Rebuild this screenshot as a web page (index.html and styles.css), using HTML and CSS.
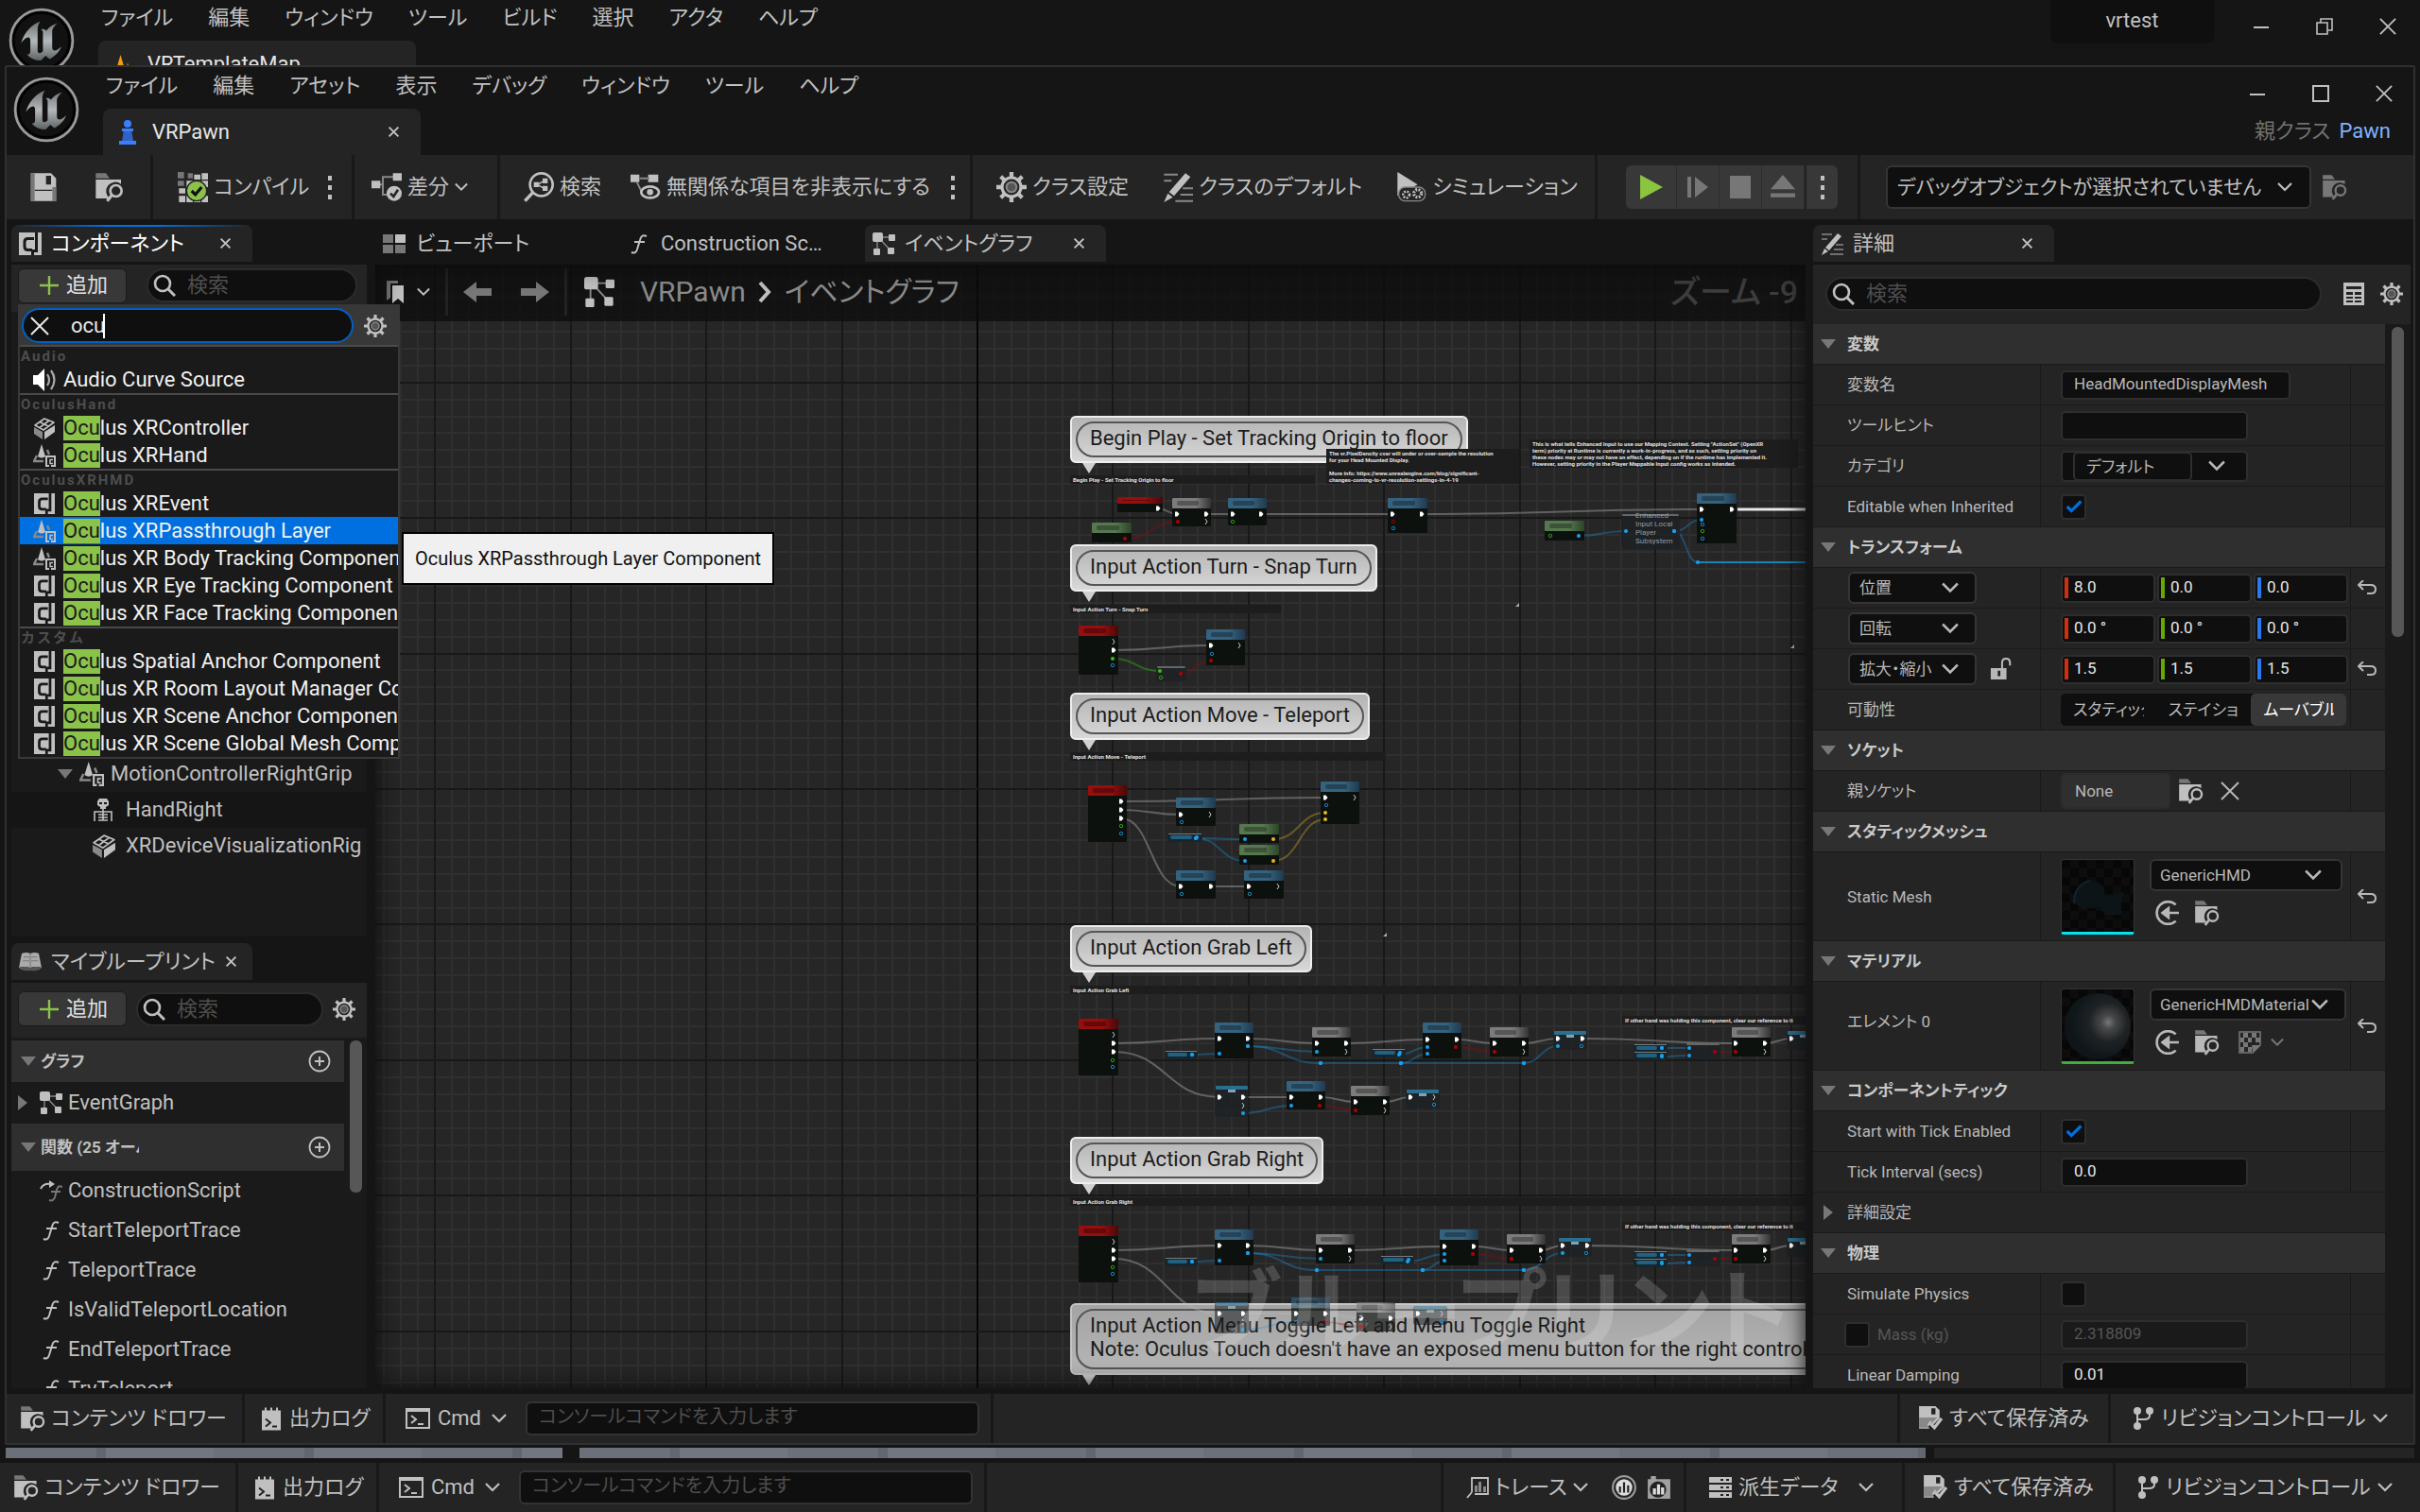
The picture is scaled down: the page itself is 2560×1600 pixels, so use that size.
FILE: index.html
```html
<!DOCTYPE html>
<html lang="ja">
<head>
<meta charset="utf-8">
<title>VRPawn</title>
<link rel="stylesheet" href="styles.css">
</head>
<body>
<svg class="defs" aria-hidden="true">
  <defs>
    <linearGradient id="steel" x1="0" y1="0" x2="0" y2="1"><stop offset="0" stop-color="#6d7274"/><stop offset=".5" stop-color="#b4b8ba"/><stop offset="1" stop-color="#5d6264"/></linearGradient>
  </defs>
  <symbol id="logo" viewBox="0 0 100 100"><circle cx="50" cy="50" r="47" fill="#111" stroke="#9b9b9b" stroke-width="4"/><circle cx="50" cy="50" r="42" fill="none" stroke="#000" stroke-width="3"/><path fill="url(#steel)" d="M48 21C36 25 24 36 19 54c3-5 8-9 11-9 2 0 3 2 3 5v16c0 4-2 5-5 5 5 6 12 9 21 9l7-7 6 5c8-4 15-11 18-19-4 4-8 6-10 6-3 0-4-2-4-5V36c0-4 3-8 8-12-8 2-13 6-17 11-2-2-5-3-8-2 2 1 3 3 3 5v28c-2 2-4 3-5 3-2 0-3-2-3-4V34c0-5 1-9 4-13z"/></symbol>
  <symbol id="save" viewBox="0 0 24 24"><path fill="currentColor" fill-rule="evenodd" d="M2 1h16l4 4v18H2zM5 14v7h14v-7zM14 3v7h4V3z"/><path fill="#777" d="M2 1h3v22H2zM19 12h3v11h-3z"/><path fill="currentColor" d="M5 15h14v6H5z"/></symbol>
  <symbol id="folder" viewBox="0 0 24 24"><path fill="#777" d="M1 1h8l3 4H1z"/><path fill="currentColor" d="M1 6h20v3.500a7 7 0 0 0-9 11.500H1z"/><circle cx="17" cy="15" r="4.500" fill="none" stroke="currentColor" stroke-width="2"/><path stroke="currentColor" stroke-width="2.400" d="M14 18l-4 5"/></symbol>
  <symbol id="compile" viewBox="0 0 24 24"><path fill="#777" d="M0 0h5v5H0zM8 1h4v4H8zM0 7h5v4H0z"/><path fill="currentColor" d="M13 2h5v4h-5zM19 1h5v5h-5zM19 7h5v5h-5zM13 7h5v4h-5zM1 13h5v4H1zM1 19h5v5H1zM7 19h5v5H7zM13 19h5v5h-5zM19 19h5v5h-5zM7 7h5v5H7z"/><circle cx="15" cy="15" r="8" fill="#8bc24a" stroke="#242424"/><path fill="none" stroke="#111" stroke-width="2.400" d="M11 15l3 3 5-6"/></symbol>
  <symbol id="dots" viewBox="0 0 8 32"><path fill="currentColor" d="M2 4h4v5H2zM2 14h4v5H2zM2 24h4v5H2z"/></symbol>
  <symbol id="diff" viewBox="0 0 24 24"><path fill="none" stroke="#888" stroke-width="1.500" d="M5 10h4V4h9M9 10v8h4"/><path fill="currentColor" d="M0 7h7v6H0zM17 1h7v6h-7z"/><circle cx="18" cy="17" r="6" fill="currentColor"/><path fill="none" stroke="#242424" stroke-width="2" d="M15 17l2.500 2.500L21 14"/></symbol>
  <symbol id="find" viewBox="0 0 24 24"><circle cx="14" cy="10" r="9" fill="none" stroke="currentColor" stroke-width="2"/><path stroke="currentColor" stroke-width="2.600" d="M7.500 16L1 23"/><path fill="currentColor" d="M8 8h4v4H8zM15 5h4v4h-4zM15 11h4v4h-4z"/><path stroke="currentColor" d="M11 10l5-3M11 10l5 3"/></symbol>
  <symbol id="hide" viewBox="0 0 24 24"><path fill="currentColor" d="M0 2h7v6H0zM14 2h8v6h-8z"/><path fill="none" stroke="#888" stroke-width="1.500" d="M7 5h8M5 8l4 8"/><ellipse cx="15.500" cy="16" rx="7" ry="4.500" fill="#242424" stroke="currentColor" stroke-width="2"/><circle cx="15.500" cy="16" r="2.500" fill="currentColor"/></symbol>
  <symbol id="gear" viewBox="0 0 24 24"><path stroke="currentColor" stroke-width="3.200" d="M12 0v24M0 12h24M3.500 3.500l17 17M20.500 3.500l-17 17"/><circle cx="12" cy="12" r="7.500" fill="#242424" stroke="currentColor" stroke-width="2.400"/><circle cx="12" cy="12" r="4" fill="#555" stroke="#888" stroke-width="1.500"/></symbol>
  <symbol id="pencil" viewBox="0 0 24 24"><path stroke="#888" stroke-width="1.500" d="M1 2h11M1 7h6M16 13h8M14 18h10M10 23h14"/><path fill="currentColor" d="M18 1l4 3L9 19l-4-3zM4 17l4 3-7 4z"/></symbol>
  <symbol id="simulate" viewBox="0 0 24 24"><path fill="currentColor" d="M1 0l16 10L1 19z"/><rect x="2" y="12" width="21" height="11" rx="5" fill="#242424" stroke="#888"/><g fill="none" stroke="currentColor" stroke-dasharray="1.400 1"><circle cx="8" cy="18" r="2.500" stroke-width="2"/><circle cx="17" cy="17" r="3" stroke-width="2.400"/></g></symbol>
  <symbol id="play" viewBox="0 0 24 24"><path fill="#8bc53f" d="M1 0l22 12L1 24z"/></symbol>
  <symbol id="step" viewBox="0 0 24 24"><path fill="currentColor" d="M1 1h4v22H1zM9 1l14 11L9 23z"/></symbol>
  <symbol id="stop" viewBox="0 0 24 24"><path fill="currentColor" d="M1 0h22v24H1z"/></symbol>
  <symbol id="eject" viewBox="0 0 24 24"><path fill="currentColor" d="M12 0l12 14H0zM0 18h24v4H0z"/></symbol>
  <symbol id="chev" viewBox="0 0 16 16"><path fill="none" stroke="currentColor" stroke-width="2.200" d="M1 4l7 7 7-7"/></symbol>
  <symbol id="comp" viewBox="0 0 24 24" preserveAspectRatio="none"><path fill="currentColor" d="M0 0h24v24H0z"/><path fill="#1a1a1a" d="M17 0h3v21h-4v3h-3v-6h4z"/><path fill="none" stroke="#1a1a1a" stroke-width="3" d="M16 6.500H9.500Q6 6.500 6 10v5q0 3.500 3.500 3.500H14"/></symbol>
  <symbol id="x" viewBox="0 0 16 16"><path stroke="currentColor" stroke-width="2.400" d="M2 2l12 12M14 2L2 14"/></symbol>
  <symbol id="xbig" viewBox="0 0 20 20"><path stroke="currentColor" stroke-width="2" d="M1 1l18 18M19 1L1 19"/></symbol>
  <symbol id="plus" viewBox="0 0 20 20"><path stroke="#8bc24a" stroke-width="2.400" d="M10 0v20M0 10h20"/></symbol>
  <symbol id="search" viewBox="0 0 24 24"><circle cx="10" cy="10" r="8" fill="none" stroke="currentColor" stroke-width="2.600"/><path stroke="currentColor" stroke-width="3" d="M16 16l7 7"/></symbol>
  <symbol id="bookmark" viewBox="0 0 18 24"><path fill="#777" d="M0 0h12v3H4v15l-4 3z"/><path fill="currentColor" d="M6 5h12v19l-6-5-6 5z"/></symbol>
  <symbol id="left" viewBox="0 0 30 24"><path fill="currentColor" d="M0 12L14 1v7h16v8H14v7z"/></symbol>
  <symbol id="right" viewBox="0 0 30 24"><path fill="currentColor" d="M30 12L16 1v7H0v8h16v7z"/></symbol>
  <symbol id="nodes" viewBox="0 0 24 24"><path fill="none" stroke="#888" stroke-width="1.400" d="M5 5v15M6 5h15M7 6l12 13"/><g fill="currentColor"><rect width="11" height="10" rx="2"/><rect x="17" y="2" width="7" height="7" rx="1"/><rect x="1" y="17" width="7" height="7" rx="1"/><rect x="16" y="16" width="7" height="7" rx="1"/></g></symbol>
  <symbol id="viewport" viewBox="0 0 24 24"><path fill="#777" d="M0 2h11v9H0zM0 13h11v9H0zM13 13h11v9H13z"/><path fill="currentColor" d="M13 2h11v9H13z"/></symbol>
  <symbol id="func" viewBox="0 0 24 24"><path fill="none" stroke="currentColor" stroke-width="2" d="M20 4c-4-2-6 0-7 4l-3 10c-1 3-3 4.500-6 3M7 10h11"/></symbol>
  <symbol id="funcover" viewBox="0 0 24 24"><path fill="none" stroke="#777" stroke-width="2" d="M24 8c-4-2-5 0-6 3l-2 8c-1 3-3 4-6 3M12 13h10"/><path fill="none" stroke="currentColor" stroke-width="2" d="M1 10q3-6 10-5"/><path fill="currentColor" d="M10 1l6 4-6 4z"/></symbol>
  <symbol id="skel" viewBox="0 0 24 24"><path fill="currentColor" fill-rule="evenodd" d="M8 0h8l2 3v4l-3 2v2H9V9L6 7V3zM8 4v2h3V4zM13 4v2h3V4z"/><path fill="none" stroke="currentColor" stroke-width="1.600" d="M12 11v12M3 24V14h18v10M7 17h10M7 20h10M7 23h10"/></symbol>
  <symbol id="mesh" viewBox="0 0 24 24"><path fill="none" stroke="currentColor" stroke-width="1.600" stroke-linejoin="round" d="M2 9l10-7 10 4-11 8zM7 5.500l9 4.500M17 4L7 11.500"/><path fill="#8a8a8a" d="M1 11l9 5v8l-9-6z"/><path fill="currentColor" d="M12 16l11-7v7l-11 8z"/></symbol>
  <symbol id="scene" viewBox="0 0 24 24"><path fill="currentColor" d="M9 0l4 13q-4 3-8 0z"/><path fill="none" stroke="#888" stroke-width="2.400" d="M4 12l-3 6h10M15 6l2 5"/><path fill="currentColor" d="M13 12h11v12h-5v-2h3v-8h-7v8h2v2h-4z"/><path fill="none" stroke="currentColor" stroke-width="1.500" d="M21 16.500h-3v4h3"/></symbol>
  <symbol id="book" viewBox="0 0 24 24"><path fill="#aaa" d="M3 3q5-2 9 0 5-2 9 0l3 15q-6-2-12 0-6-2-12 0z"/><path fill="none" stroke="#777" d="M12 3v14M5 7q3-1 6 0M4 11q3-1 7 0M13 7q3-1 6 0M13 11q4-1 7 0"/><path fill="#555" d="M0 18q6-2 12 0 6-2 12 0-3 4-11 3Q3 22 0 18z"/></symbol>
  <symbol id="pluscircle" viewBox="0 0 24 24"><circle cx="12" cy="12" r="10.500" fill="none" stroke="currentColor" stroke-width="1.800"/><path stroke="currentColor" stroke-width="2" d="M12 7v10M7 12h10"/></symbol>
  <symbol id="log" viewBox="0 0 20 24"><path fill="currentColor" d="M0 3h20v21H0z"/><path stroke="currentColor" stroke-width="2" d="M4 0v4M10 0v4M16 0v4"/><path fill="none" stroke="#222" stroke-width="2" d="M4 12l5 4-5 4M11 20h5"/></symbol>
  <symbol id="cmd" viewBox="0 0 26 22"><path fill="none" stroke="currentColor" stroke-width="2" d="M1 1h24v20H1zM6 8l5 4-5 4M13 17h6"/><path fill="currentColor" d="M1 1h24v3H1z"/></symbol>
  <symbol id="saved" viewBox="0 0 24 24"><path fill="currentColor" fill-rule="evenodd" d="M1 0h16l4 4v8l-6 6-2-2-3 4 1 2H1zM13 2v6h4V2z"/><path fill="#888" d="M1 11h18l-5 5-2-2-3 4 2 3H1z"/><path fill="none" stroke="currentColor" stroke-width="3" d="M12 17l4 4 7-9"/></symbol>
  <symbol id="branch" viewBox="0 0 24 24"><g fill="currentColor"><circle cx="6" cy="4" r="4"/><circle cx="19" cy="4" r="4"/><circle cx="6" cy="20" r="4"/></g><path fill="none" stroke="currentColor" stroke-width="2" d="M6 4v16M19 4v5q0 4-6 4H6"/></symbol>
  <symbol id="trace" viewBox="0 0 24 24"><path fill="none" stroke="currentColor" stroke-width="1.800" d="M6 17V2h17v17H9M6 17l-5 6"/><path fill="#888" d="M9 10h3v7H9zM13 6h3v11h-3zM18 11h3v6h-3z"/></symbol>
  <symbol id="insight" viewBox="0 0 24 24"><circle cx="12" cy="12" r="11" fill="none" stroke="#999" stroke-width="2"/><circle cx="12" cy="12" r="8" fill="#ddd"/><path fill="#222" d="M7 11h2v6H7zM11 7h2v10h-2zM15 10h2v7h-2z"/></symbol>
  <symbol id="cam" viewBox="0 0 24 24"><path fill="#a0a0a0" d="M1 4h3V1h5v3h14v19H1z"/><circle cx="11" cy="14" r="8" fill="#222"/><path fill="#ddd" d="M6 13h3v6H6zM10 9h3v10h-3zM14 12h3v7h-3z"/></symbol>
  <symbol id="ddc" viewBox="0 0 24 24"><path fill="currentColor" d="M0 1h24v6H0zM0 9h24v6H0zM0 17h24v6H0z"/><path fill="#222" d="M12 3h3v2h-3zM18 3h3v2h-3zM12 11h3v2h-3zM18 11h3v2h-3zM12 19h3v2h-3zM18 19h3v2h-3z"/></symbol>
  <symbol id="reset" viewBox="0 0 20 16"><path fill="none" stroke="currentColor" stroke-width="2" d="M6 0L1 5l5 5M1 5h13q5 0 5 4.500T14 14h-4"/></symbol>
  <symbol id="lock" viewBox="0 0 24 26"><path fill="currentColor" fill-rule="evenodd" d="M0 12h18v13H0zM8 15v6h3v-6z"/><path fill="none" stroke="currentColor" stroke-width="2.200" d="M13 12V6q0-5 4.500-5T22 6v3"/></symbol>
  <symbol id="use" viewBox="0 0 24 24"><path fill="none" stroke="currentColor" stroke-width="2.400" d="M20 4a11 11 0 1 0 0 16M23 12H8"/><path fill="currentColor" d="M14 5v14l-9-7z"/></symbol>
  <symbol id="checker" viewBox="0 0 24 24"><path fill="none" stroke="currentColor" stroke-width="1.500" d="M1 1h22v14l-8 8H1z"/><path fill="currentColor" d="M5 2h5v5H5zM14 2h5v5h-5zM2 7h4v5H2zM10 7h4v5h-4zM18 7h5v5h-5zM5 12h5v5H5zM14 15h9l-8 8zM10 17h4v5h-4zM2 17h4v5H2z"/></symbol>
  <symbol id="table" viewBox="0 0 24 24"><path fill="currentColor" fill-rule="evenodd" d="M1 0h22v24H1zM4 4v3h16V4zM4 10v3h7v-3zM13 10v3h7v-3zM4 15v2h7v-2zM13 15v2h7v-2zM4 19v2h7v-2zM13 19v2h7v-2z"/></symbol>
  <symbol id="audio" viewBox="0 0 24 24"><path fill="#fff" d="M0 7h5l7-7v24l-7-7H0z"/><path fill="none" stroke="#aaa" stroke-width="2.200" d="M15 6q4 6 0 12M19 2q7 10 0 20"/></symbol>
  <symbol id="pawn" viewBox="0 0 20 26"><circle cx="10" cy="4" r="4" fill="#3d7eff"/><path fill="#2f62c8" d="M6 11h8l2 11H4z"/><path fill="#3d7eff" d="M4 9h12v3H4zM1 22h18v4H1z"/></symbol>
  <symbol id="map" viewBox="0 0 24 24"><path fill="#f39c12" d="M9 0l7 24H2zM18 10l4 14h-7z"/></symbol>
</svg>

<header class="outer-head">
  <svg class="logo"><use href="#logo"/></svg>
  <div class="head-main">
    <nav class="menu"><a href="#f">ファイル</a><a href="#e">編集</a><a href="#w">ウィンドウ</a><a href="#t">ツール</a><a href="#b">ビルド</a><a href="#s">選択</a><a href="#a">アクタ</a><a href="#h">ヘルプ</a></nav>
    <div class="doc-tab"><svg class="i20"><use href="#map"/></svg><span>VRTemplateMap</span></div>
  </div>
  <div class="project">vrtest</div>
  <div class="winctl">
    <button aria-label="最小化"><svg class="i18" viewBox="0 0 18 18"><path stroke="currentColor" stroke-width="2" d="M1 10h16"/></svg></button>
    <button aria-label="元に戻す"><svg class="i18" viewBox="0 0 18 18"><path fill="none" stroke="currentColor" stroke-width="1.600" d="M1 5h11v12H1zM5 5V1h12v12h-5"/></svg></button>
    <button aria-label="閉じる"><svg class="i18"><use href="#xbig"/></svg></button>
  </div>
</header>

<main class="window">
  <header class="inner-head">
    <svg class="logo"><use href="#logo"/></svg>
    <div class="head-main">
      <nav class="menu"><a href="#f">ファイル</a><a href="#e">編集</a><a href="#as">アセット</a><a href="#v">表示</a><a href="#d">デバッグ</a><a href="#w">ウィンドウ</a><a href="#t">ツール</a><a href="#h">ヘルプ</a></nav>
      <div class="doc-tab"><svg class="pawn"><use href="#pawn"/></svg><span>VRPawn</span><button aria-label="閉じる"><svg class="i12"><use href="#x"/></svg></button></div>
    </div>
    <div class="head-right">
      <div class="winctl">
        <button aria-label="最小化"><svg class="i18" viewBox="0 0 18 18"><path stroke="currentColor" stroke-width="2" d="M1 10h16"/></svg></button>
        <button aria-label="最大化"><svg class="i18" viewBox="0 0 18 18"><path fill="none" stroke="currentColor" stroke-width="2" d="M1 1h16v16H1z"/></svg></button>
        <button aria-label="閉じる"><svg class="i18"><use href="#xbig"/></svg></button>
      </div>
      <p class="parent">親クラス <a href="#pawn-class">Pawn</a></p>
    </div>
  </header>

  <div class="toolbar">
    <div class="grp g1"><button aria-label="保存"><svg class="i32"><use href="#save"/></svg></button><button aria-label="参照"><svg class="i32"><use href="#folder"/></svg></button></div>
    <div class="grp g2"><button><svg class="i32"><use href="#compile"/></svg>コンパイル</button><button aria-label="オプション"><svg class="dots"><use href="#dots"/></svg></button></div>
    <div class="grp g3"><button><svg class="i32"><use href="#diff"/></svg>差分<svg class="i14"><use href="#chev"/></svg></button></div>
    <div class="grp g4"><button><svg class="i32"><use href="#find"/></svg>検索</button><button><svg class="i32"><use href="#hide"/></svg>無関係な項目を非表示にする</button><button aria-label="オプション"><svg class="dots"><use href="#dots"/></svg></button></div>
    <div class="grp g5"><button><svg class="i32"><use href="#gear"/></svg>クラス設定</button><button><svg class="i32"><use href="#pencil"/></svg>クラスのデフォルト</button><button><svg class="i32"><use href="#simulate"/></svg>シミュレーション</button></div>
    <div class="grp g6"><div class="playset"><button class="first" aria-label="再生"><svg class="i26"><use href="#play"/></svg></button><button aria-label="ステップ"><svg class="i24"><use href="#step"/></svg></button><button aria-label="停止"><svg class="i24"><use href="#stop"/></svg></button><button aria-label="イジェクト"><svg class="i26"><use href="#eject"/></svg></button><button class="more" aria-label="その他"><svg class="dots"><use href="#dots"/></svg></button></div></div>
    <div class="grp g7"><span class="select debug"><select aria-label="デバッグ"><option>デバッグオブジェクトが選択されていません</option></select><svg class="i16"><use href="#chev"/></svg></span><button class="dim" aria-label="参照"><svg class="i28"><use href="#folder"/></svg></button></div>
  </div>

  <div class="work">
    <aside class="left">
      <div class="tabs"><div class="tab active"><svg class="i24"><use href="#comp"/></svg><span>コンポーネント</span><button aria-label="閉じる"><svg class="i12"><use href="#x"/></svg></button></div></div>
      <section class="panel components">
        <div class="bar"><button class="add"><svg class="i20"><use href="#plus"/></svg>追加</button><label class="search"><svg class="i24"><use href="#search"/></svg><input type="search" placeholder="検索" aria-label="検索"></label></div>
        <ul class="tree">
          <li><i class="tri"></i><svg class="i26"><use href="#scene"/></svg>MotionControllerRightGrip</li>
          <li class="child alt"><svg class="i24"><use href="#skel"/></svg>HandRight</li>
          <li class="child"><svg class="i26"><use href="#mesh"/></svg>XRDeviceVisualizationRig</li>
        </ul>
        <div class="popup">
          <div class="pop-bar"><label class="pop-search"><svg class="i20"><use href="#xbig"/></svg><input type="text" value="ocu" aria-label="コンポーネントを検索"><i class="caret"></i></label><button aria-label="設定"><svg class="i24"><use href="#gear"/></svg></button></div>
          <h4>Audio</h4>
          <ul><li><svg class="i24"><use href="#audio"/></svg>Audio Curve Source</li></ul>
          <h4>OculusHand</h4>
          <ul><li><svg class="i24"><use href="#mesh"/></svg><mark>Ocu</mark>lus XRController</li><li><svg class="i24"><use href="#scene"/></svg><mark>Ocu</mark>lus XRHand</li></ul>
          <h4>OculusXRHMD</h4>
          <ul><li><svg class="i24 c"><use href="#comp"/></svg><mark>Ocu</mark>lus XREvent</li><li class="sel"><svg class="i24"><use href="#scene"/></svg><mark>Ocu</mark>lus XRPassthrough Layer</li><li><svg class="i24"><use href="#scene"/></svg><mark>Ocu</mark>lus XR Body Tracking Component</li><li><svg class="i24 c"><use href="#comp"/></svg><mark>Ocu</mark>lus XR Eye Tracking Component</li><li><svg class="i24 c"><use href="#comp"/></svg><mark>Ocu</mark>lus XR Face Tracking Component</li></ul>
          <h4>カスタム</h4>
          <ul><li><svg class="i24 c"><use href="#comp"/></svg><mark>Ocu</mark>lus Spatial Anchor Component</li><li><svg class="i24 c"><use href="#comp"/></svg><mark>Ocu</mark>lus XR Room Layout Manager Component</li><li><svg class="i24 c"><use href="#comp"/></svg><mark>Ocu</mark>lus XR Scene Anchor Component</li><li><svg class="i24 c"><use href="#comp"/></svg><mark>Ocu</mark>lus XR Scene Global Mesh Component</li></ul>
        </div>
        <div class="tooltip" role="tooltip">Oculus XRPassthrough Layer Component</div>
      </section>
      <div class="tabs second"><div class="tab"><svg class="i24"><use href="#book"/></svg><span>マイブループリント</span><button aria-label="閉じる"><svg class="i12"><use href="#x"/></svg></button></div></div>
      <section class="panel blueprint">
        <div class="bar"><button class="add"><svg class="i20"><use href="#plus"/></svg>追加</button><label class="search"><svg class="i24"><use href="#search"/></svg><input type="search" placeholder="検索" aria-label="検索"></label><button aria-label="設定"><svg class="i24"><use href="#gear"/></svg></button></div>
        <div class="scroll">
          <div class="items">
            <h3><i class="tri"></i>グラフ<button aria-label="グラフを追加"><svg class="i24"><use href="#pluscircle"/></svg></button></h3>
            <ul><li class="graph"><i class="tri side"></i><svg class="i24"><use href="#nodes"/></svg>EventGraph</li></ul>
            <h3 class="tall"><i class="tri"></i><span class="cut">関数 (25 オーバーライド可能)</span><button aria-label="関数を追加"><svg class="i24"><use href="#pluscircle"/></svg></button></h3>
            <ul class="fn"><li><svg class="i24"><use href="#funcover"/></svg>ConstructionScript</li><li><svg class="i24"><use href="#func"/></svg>StartTeleportTrace</li><li><svg class="i24"><use href="#func"/></svg>TeleportTrace</li><li><svg class="i24"><use href="#func"/></svg>IsValidTeleportLocation</li><li><svg class="i24"><use href="#func"/></svg>EndTeleportTrace</li><li><svg class="i24"><use href="#func"/></svg>TryTeleport</li></ul>
          </div>
          <div class="thumb"></div>
        </div>
      </section>
    </aside>

    <section class="center">
      <div class="tabs"><div class="tab off"><svg class="i24"><use href="#viewport"/></svg><span>ビューポート</span></div><div class="tab off"><svg class="i24"><use href="#func"/></svg><span>Construction Sc…</span></div><div class="tab"><svg class="i24"><use href="#nodes"/></svg><span>イベントグラフ</span><button aria-label="閉じる"><svg class="i12"><use href="#x"/></svg></button></div></div>
      <div class="graph-area">
        <svg class="canvas"><g id="grid"></g></svg>
        <p class="mark-text">ブループリント</p>
        <div class="bubble" style="left:735px;top:160px"><span>Begin Play - Set Tracking Origin to floor</span></div>
        <div class="bubble" style="left:735px;top:296px"><span>Input Action Turn - Snap Turn</span></div>
        <div class="bubble" style="left:735px;top:453px"><span>Input Action Move - Teleport</span></div>
        <div class="bubble" style="left:735px;top:699px"><span>Input Action Grab Left</span></div>
        <div class="bubble" style="left:735px;top:923px"><span>Input Action Grab Right</span></div>
        <div class="bubble wide" style="left:735px;top:1099px"><span>Input Action Menu Toggle Left and Menu Toggle Right<br>Note: Oculus Touch doesn't have an exposed menu button for the right controller</span></div>
        <svg class="canvas over"><g id="nodes-layer" transform="translate(-397 -280)"></g></svg>
        <p class="note" style="left:735px;top:223px;width:259px">Begin Play - Set Tracking Origin to floor</p>
        <p class="note" style="left:735px;top:360px;width:223px">Input Action Turn - Snap Turn</p>
        <p class="note" style="left:735px;top:516px;width:334px">Input Action Move - Teleport</p>
        <p class="note" style="left:735px;top:763px;width:778px">Input Action Grab Left</p>
        <p class="note" style="left:735px;top:987px;width:778px">Input Action Grab Right</p>
        <p class="note" style="left:1006px;top:195px;width:204px">The vr.PixelDensity cvar will under or over-sample the resolution<br>for your Head Mounted Display.<br><br>More info: https://www.unrealengine.com/blog/significant-<br>changes-coming-to-vr-resolution-settings-in-4-19</p>
        <p class="note" style="left:1221px;top:185px;width:284px">This is what tells Enhanced Input to use our Mapping Context. Setting "ActionSet" (OpenXR<br>term) priority at Runtime is currently a work-in-progress, and as such, setting priority on<br>these nodes may or may not have an effect, depending on if the runtime has implemented it.<br>However, setting priority in the Player Mappable Input config works as intended.</p>
        <p class="note" style="left:1319px;top:795px;width:300px">If other hand was holding this component, clear our reference to it</p>
        <p class="note" style="left:1319px;top:1013px;width:300px">If other hand was holding this component, clear our reference to it</p>
        <p class="node-name" style="left:1333px;top:261px">Enhanced<br>Input Local<br>Player<br>Subsystem</p>
        <div class="graph-bar">
          <button aria-label="ブックマーク"><svg class="bm"><use href="#bookmark"/></svg><svg class="i14"><use href="#chev"/></svg></button><i class="vr"></i>
          <button aria-label="戻る"><svg class="arrow"><use href="#left"/></svg></button><button aria-label="進む"><svg class="arrow"><use href="#right"/></svg></button><i class="vr"></i>
          <svg class="i34"><use href="#nodes"/></svg><span class="crumb">VRPawn</span><svg class="crumb-sep" viewBox="0 0 16 24"><path fill="none" stroke="currentColor" stroke-width="4" d="M3 2l9 10-9 10"/></svg><span class="crumb">イベントグラフ</span>
          <b class="zoom">ズーム -9</b>
        </div>
      </div>
    </section>

    <aside class="right">
      <div class="tabs"><div class="tab"><svg class="i24"><use href="#pencil"/></svg><span>詳細</span><button aria-label="閉じる"><svg class="i12"><use href="#x"/></svg></button></div></div>
      <section class="panel details">
        <div class="bar"><label class="search"><svg class="i24"><use href="#search"/></svg><input type="search" placeholder="検索" aria-label="検索"></label><button aria-label="表示"><svg class="i24"><use href="#table"/></svg></button><button aria-label="設定"><svg class="i24"><use href="#gear"/></svg></button></div>
        <div class="scroll">
          <form class="props">
            <h3><i class="tri"></i>変数</h3>
            <div class="row"><label for="vname">変数名</label><div><input id="vname" class="name" value="HeadMountedDisplayMesh"></div><span></span></div>
            <div class="row"><label for="vtip">ツールヒント</label><div><input id="vtip"></div><span></span></div>
            <div class="row"><label for="vcat">カテゴリ</label><div><span class="combo cat"><input id="vcat" value="デフォルト"><svg class="i18"><use href="#chev"/></svg></span></div><span></span></div>
            <div class="row"><label for="vedit">Editable when Inherited</label><div><input id="vedit" type="checkbox" checked></div><span></span></div>
            <h3><i class="tri"></i>トランスフォーム</h3>
            <div class="row"><div class="lab"><span class="select kind"><select aria-label="位置"><option>位置</option></select><svg class="i18"><use href="#chev"/></svg></span></div><div class="xyz"><input class="ax" aria-label="X" value="8.0"><input class="ay" aria-label="Y" value="0.0"><input class="az" aria-label="Z" value="0.0"></div><span><svg class="reset"><use href="#reset"/></svg></span></div>
            <div class="row"><div class="lab"><span class="select kind"><select aria-label="回転"><option>回転</option></select><svg class="i18"><use href="#chev"/></svg></span></div><div class="xyz"><input class="ax" aria-label="X" value="0.0 °"><input class="ay" aria-label="Y" value="0.0 °"><input class="az" aria-label="Z" value="0.0 °"></div><span></span></div>
            <div class="row"><div class="lab"><span class="select kind"><select aria-label="拡大・縮小"><option>拡大・縮小</option></select><svg class="i18"><use href="#chev"/></svg></span><svg class="i24"><use href="#lock"/></svg></div><div class="xyz"><input class="ax" aria-label="X" value="1.5"><input class="ay" aria-label="Y" value="1.5"><input class="az" aria-label="Z" value="1.5"></div><span><svg class="reset"><use href="#reset"/></svg></span></div>
            <div class="row"><div class="lab">可動性</div><div><div class="seg"><label><input type="radio" name="mob"><span>スタティック</span></label><label><input type="radio" name="mob"><span>ステイショナリー</span></label><label><input type="radio" name="mob" checked><span>ムーバブル</span></label></div></div><span></span></div>
            <h3><i class="tri"></i>ソケット</h3>
            <div class="row"><div class="lab">親ソケット</div><div class="sock"><output>None</output><svg class="i28"><use href="#folder"/></svg><svg class="i20"><use href="#xbig"/></svg></div><span></span></div>
            <h3><i class="tri"></i>スタティックメッシュ</h3>
            <div class="row big"><div class="lab">Static Mesh</div><div><div class="shot mesh"><svg viewBox="0 0 76 74"><path fill="#0c1418" d="M12 44Q14 24 34 22q10 2 12 16l20-4-3 10v14H46l-6-8-18 2z"/><path fill="none" stroke="#14222a" stroke-width="2" d="M13 46Q13 26 30 22"/></svg></div><div class="asset"><span class="select"><select aria-label="Static Mesh"><option>GenericHMD</option></select><svg class="i18"><use href="#chev"/></svg></span><div class="tools"><svg class="i26"><use href="#use"/></svg><svg class="i28"><use href="#folder"/></svg></div></div></div><span><svg class="reset"><use href="#reset"/></svg></span></div>
            <h3><i class="tri"></i>マテリアル</h3>
            <div class="row big"><div class="lab element">エレメント 0</div><div><div class="shot mat"><i class="ball"></i></div><div class="asset"><span class="select"><select aria-label="エレメント 0"><option>GenericHMDMaterial</option></select><svg class="i18"><use href="#chev"/></svg></span><div class="tools"><svg class="i26"><use href="#use"/></svg><svg class="i28"><use href="#folder"/></svg><svg class="i24 dim"><use href="#checker"/></svg><svg class="i14 dim"><use href="#chev"/></svg></div></div></div><span><svg class="reset"><use href="#reset"/></svg></span></div>
            <h3><i class="tri"></i>コンポーネントティック</h3>
            <div class="row"><label for="tick">Start with Tick Enabled</label><div><input id="tick" type="checkbox" checked></div><span></span></div>
            <div class="row"><label for="intv">Tick Interval (secs)</label><div><input id="intv" class="num" value="0.0"></div><span></span></div>
            <div class="adv"><i class="tri side"></i>詳細設定</div>
            <h3><i class="tri"></i>物理</h3>
            <div class="row"><label for="sim">Simulate Physics</label><div><input id="sim" type="checkbox"></div><span></span></div>
            <div class="row off"><label class="mass"><input type="checkbox">Mass (kg)</label><div><input aria-label="Mass (kg)" value="2.318809" disabled></div><span></span></div>
            <div class="row"><label for="damp">Linear Damping</label><div><input id="damp" class="num" value="0.01"></div><span></span></div>
          </form>
          <div class="thumb"></div>
        </div>
      </section>
    </aside>
  </div>

  <footer class="status">
    <button class="s1"><svg class="i28"><use href="#folder"/></svg>コンテンツ ドロワー</button>
    <button class="s2"><svg class="log"><use href="#log"/></svg>出力ログ</button>
    <div class="s3"><button><svg class="cmd"><use href="#cmd"/></svg>Cmd<svg class="i16"><use href="#chev"/></svg></button><input placeholder="コンソールコマンドを入力します" aria-label="コンソール"></div>
    <i class="fill"></i>
    <button class="s4"><svg class="i26"><use href="#saved"/></svg>すべて保存済み</button>
    <button class="s5"><svg class="i24"><use href="#branch"/></svg>リビジョンコントロール<svg class="i16"><use href="#chev"/></svg></button>
  </footer>
</main>

<div class="strip"><i class="view a"></i><i class="view b"></i><i class="rest"></i></div>

<footer class="status outer">
  <button class="s1"><svg class="i28"><use href="#folder"/></svg>コンテンツ ドロワー</button>
  <button class="s2"><svg class="log"><use href="#log"/></svg>出力ログ</button>
  <div class="s3"><button><svg class="cmd"><use href="#cmd"/></svg>Cmd<svg class="i16"><use href="#chev"/></svg></button><input placeholder="コンソールコマンドを入力します" aria-label="コンソール"></div>
  <i class="fill"></i>
  <div class="s6"><button><svg class="i24"><use href="#trace"/></svg>トレース<svg class="i16"><use href="#chev"/></svg></button><button aria-label="記録"><svg class="i26"><use href="#insight"/></svg></button><button aria-label="スナップショット"><svg class="i26"><use href="#cam"/></svg></button></div>
  <button class="s7"><svg class="i24"><use href="#ddc"/></svg>派生データ<svg class="i16"><use href="#chev"/></svg></button>
  <button class="s4"><svg class="i26"><use href="#saved"/></svg>すべて保存済み</button>
  <button class="s5"><svg class="i24"><use href="#branch"/></svg>リビジョンコントロール<svg class="i16"><use href="#chev"/></svg></button>
</footer>
<script src="graph.js"></script>
</body>
</html>
```
FILE: styles.css
```css
* { box-sizing: border-box; margin: 0; padding: 0; font-feature-settings: "palt"; }
html, body { height: 100%; }
body { display: flex; flex-direction: column; overflow: hidden; background: #151515; color: #c0c0c0; font: 22px/28px Roboto, "Noto Sans CJK JP", sans-serif; }
button, input, select { font: inherit; color: inherit; background: none; border: 0; border-radius: 0; outline: 0; appearance: none; min-width: 0; }
button { display: flex; align-items: center; white-space: nowrap; }
ul { list-style: none; }
a { color: inherit; text-decoration: none; }
svg { flex: none; display: block; }
.defs { position: absolute; width: 0; height: 0; }
.i12 { width: 13px; height: 13px; } .i14 { width: 14px; height: 14px; } .i16 { width: 16px; height: 16px; }
.i18 { width: 18px; height: 18px; } .i20 { width: 20px; height: 20px; } .i24 { width: 24px; height: 24px; }
.i26 { width: 26px; height: 26px; } .i28 { width: 28px; height: 28px; } .i32 { width: 32px; height: 32px; } .i34 { width: 36px; height: 32px; }
.dots { width: 8px; height: 32px; }
.dim { color: #777; }

/* window headers */
.outer-head { display: flex; flex: none; height: 69px; overflow: hidden; padding-left: 9px; }
.logo { width: 70px; height: 70px; margin-top: 8px; }
.head-main { display: flex; flex-direction: column; flex: 1; margin-left: 25px; }
.menu { display: flex; flex: none; gap: 37px; height: 43px; padding: 5px 3px 0; white-space: nowrap; }
.doc-tab { display: flex; align-items: center; gap: 16px; flex: none; width: 336px; height: 49px; padding: 0 22px 0 16px; border-radius: 8px 8px 0 0; background: #242424; color: #e6e6e6; }
.doc-tab button { margin-left: auto; color: #c0c0c0; }
.pawn { width: 20px; height: 26px; }
.project { width: 173px; height: 46px; padding-top: 8px; border-radius: 0 0 8px 8px; background: #0f0f0f; text-align: center; }
.winctl { display: flex; gap: 49px; height: 56px; align-items: center; padding: 0 25px 0 41px; }
.window { display: flex; flex-direction: column; flex: 1; min-height: 0; margin: 0 5px; border: 2px solid #303030; border-radius: 2px; background: #151515; }
.inner-head { display: flex; flex: none; height: 93px; padding-left: 7px; }
.inner-head .logo { margin-top: 10px; }
.inner-head .menu { height: 44px; padding-top: 6px; }
.head-right { display: flex; flex-direction: column; align-items: flex-end; }
.head-right .winctl { padding-right: 22px; }
.parent { padding-right: 24px; margin-top: -2px; color: #707070; }
.parent a { margin-left: 4px; color: #7fb2ff; }

/* toolbar */
.toolbar { display: flex; flex: none; height: 68px; background: #242424; }
.grp { display: flex; align-items: center; flex: none; border-right: 3px solid #181818; }
.grp button { gap: 6px; }
.g1 { width: 155px; padding-left: 23px; gap: 38px; }
.g2 { width: 213px; padding-left: 26px; gap: 18px; }
.g3 { width: 154px; padding-left: 18px; }
.g4 { width: 500px; padding-left: 25px; gap: 31px; }
.g4 button:last-child { margin-left: -11px; }
.g5 { width: 661px; padding-left: 25px; gap: 36px; }
.g6 { width: 278px; padding-left: 30px; }
.g7 { border: 0; padding-left: 27px; gap: 11px; }
.playset { display: flex; height: 46px; border-radius: 6px; overflow: hidden; background: #383838; color: #777; }
.playset button { width: 45px; justify-content: center; border-right: 1px solid #2c2c2c; }
.playset .first { width: 54px; }
.playset .more { width: 35px; border: 0; border-left: 2px solid #222; color: #c0c0c0; }
.select { position: relative; display: block; border: 2px solid #353535; border-radius: 6px; background: #0f0f0f; }
.select select { display: block; width: 100%; height: 100%; padding-left: 13px; }
.select svg { position: absolute; right: 20px; top: 0; bottom: 0; margin: auto 0; pointer-events: none; }
.debug { width: 450px; height: 46px; }
.debug select { padding-left: 10px; font-size: 21px; }
.select.debug svg { right: 18px; }

/* work area */
.work { display: flex; flex: 1; min-height: 0; }
.left { display: flex; flex-direction: column; flex: none; width: 376px; margin-left: 5px; }
.center { display: flex; flex-direction: column; flex: 1; min-width: 0; margin-left: 9px; }
.right { display: flex; flex-direction: column; flex: none; width: 632px; margin: 0 3px 0 8px; }
.tabs { display: flex; flex: none; gap: 4px; height: 48px; padding-top: 6px; }
.tab { display: flex; align-items: center; width: 255px; height: 39px; padding: 0 22px 0 8px; gap: 10px; border-radius: 8px 8px 0 0; background: #242424; white-space: nowrap; }
.tab button { margin-left: auto; }
.second .tab { padding-right: 28px; }
.tab.off { background: none; gap: 11px; }
.tab.active { color: #fff; background: linear-gradient(90deg, transparent, #0070e0 40%, #0070e0 60%, transparent) top / 100% 2px no-repeat, #242424; }
.tab.active svg { color: #c0c0c0; }
.panel { display: flex; flex-direction: column; background: #1a1a1a; }
.components { position: relative; flex: none; height: 711px; }
.blueprint { flex: 1; min-height: 0; }
.second { margin-top: 1px; }
.bar { display: flex; align-items: center; flex: none; background: #242424; }
.components .bar { height: 50px; padding: 0 10px 6px 7px; gap: 21px; }
.blueprint .bar { height: 58px; padding: 0 12px 3px 7px; gap: 10px; }
.add { width: 115px; height: 37px; padding-left: 22px; gap: 8px; border: 1px solid #1a1a1a; border-radius: 6px; background: #383838; color: #e0e0e0; }
.search { display: flex; align-items: center; flex: 1; min-width: 0; height: 36px; padding: 0 5px; gap: 12px; border: 2px solid #2c2c2c; border-radius: 18px; background: #0f0f0f; }
.search input { flex: 1; }
::placeholder { color: #4d4d4d; opacity: 1; }
.tri { flex: none; width: 0; height: 0; border: 8px solid transparent; border-top: 10px solid #777; border-bottom: 0; }
.tri.side { border: 8px solid transparent; border-left: 10px solid #777; border-right: 0; }
.tree { padding-top: 470px; }
.tree li { display: flex; align-items: center; height: 38px; padding-left: 49px; gap: 7px; white-space: nowrap; overflow: hidden; }
.tree .child { padding-left: 85px; gap: 12px; }
.tree .child .i26 { margin-right: -2px; }
.tree .alt { background: #151515; }
.blueprint .scroll { display: flex; gap: 6px; flex: 1; min-height: 0; overflow: hidden; padding-top: 3px; }
.blueprint { margin-bottom: 6px; }
.items { width: 352px; }
.items h3 { display: flex; align-items: center; height: 44px; padding: 0 14px 0 10px; gap: 5px; background: #2f2f2f; font-size: 17px; }
.items h3.tall { height: 50px; }
.items h3 button { margin-left: auto; }
.cut { width: 104px; overflow: hidden; white-space: nowrap; }
.items li { display: flex; align-items: center; height: 42px; padding-left: 30px; gap: 6px; }
.items .graph { height: 44px; padding-left: 7px; }
.graph .tri { margin-right: 7px; }
.thumb { width: 13px; border-radius: 6px; background: #575757; }
.blueprint .thumb { height: 161px; }

/* component picker */
.popup { position: absolute; left: 7px; top: 42px; width: 404px; height: 481px; border: 2px solid #383838; background: #1a1a1a; overflow: hidden; color: #fff; z-index: 5; }
.pop-bar { display: flex; align-items: center; height: 41px; padding: 0 12px 0 2px; gap: 11px; background: #383838; color: #c0c0c0; }
.pop-search { display: flex; align-items: center; flex: 1; height: 37px; padding-left: 7px; border: 2px solid #0060c4; border-radius: 19px; background: #0f0f0f; color: #e8e8e8; }
.pop-search input { width: 34px; margin-left: 23px; flex: none; }
.caret { width: 2px; height: 26px; background: #fff; }
.popup h4 { height: 22px; border-top: 2px solid #4a4a4a; padding-left: 1px; font: 700 15px/20px Roboto, "Noto Sans CJK JP", sans-serif; letter-spacing: 2px; color: #4d4d4d; }
.popup li { display: flex; align-items: center; height: 29px; padding-left: 14px; white-space: nowrap; color: #f0f0f0; }
.popup li svg { margin-right: 8px; color: #c0c0c0; }
.popup li .c { width: 22px; height: 22px; margin: 0 9px 0 1px; }
.popup mark { height: 26px; line-height: 26px; background: #8bc24a; color: #1a1a1a; }
.popup .sel { background: #0070e0; }
.tooltip { position: absolute; left: 413px; top: 283px; padding: 12px 12px; border: 2px solid #000; background: #f0f0f0; color: #111; font-size: 20px; white-space: nowrap; z-index: 6; }

/* graph */
.graph-area { position: relative; flex: 1; min-height: 0; margin-bottom: 6px; overflow: hidden; background: #262626; }
.graph-area::after { content: ""; position: absolute; inset: 0; box-shadow: inset 0 0 24px #0b0b0b; pointer-events: none; z-index: 4; }
.canvas { position: absolute; inset: 0; width: 100%; height: 100%; }
.over { z-index: 1; }
.bubble { position: absolute; height: 50px; padding: 4px; border: 2px solid #eee; border-radius: 6px; background: linear-gradient(#b4b4b4, #d8d8d8); color: #1c1c1c; white-space: nowrap; line-height: 25px; }
.bubble::before { content: ""; position: absolute; inset: 4px; border: 2px solid #555; border-radius: 19px; }
.bubble::after { content: ""; position: absolute; left: 11px; top: 48px; border: 7px solid transparent; border-top: 11px solid #d0d0d0; border-bottom: 0; }
.bubble span { position: relative; display: block; padding: 5px 15px; z-index: 2; }
.bubble.wide { height: 76px; background: linear-gradient(#a4a4a4, #b6b6b6); border-color: #c4c4c4; }
.bubble.wide::after { top: 74px; }
.note { position: absolute; padding: 1px 3px; background: #1d1d1d; color: #e0e0e0; font: 700 6px/7px Roboto, sans-serif; white-space: nowrap; z-index: 3; }
.node-name { position: absolute; font: 8px/9px Roboto, sans-serif; color: #999; z-index: 3; }
.mark-text { position: absolute; right: 16px; bottom: 22px; font-size: 100px; line-height: 110px; font-weight: 700; color: rgba(255, 255, 255, .17); white-space: nowrap; z-index: 3; }
.graph-bar { position: absolute; inset: 0 0 auto; display: flex; align-items: center; height: 60px; padding: 0 8px 2px 12px; background: rgba(12, 12, 12, .75); z-index: 3; }
.graph-bar button { gap: 14px; color: #c0c0c0; }
.bm { width: 18px; height: 26px; }
.vr { width: 3px; height: 50px; margin: 0 16px; background: #222; }
.arrow { width: 30px; height: 24px; color: #777; }
.graph-bar button + button { margin-left: 31px; }
.graph-bar .i34 { color: #c0c0c0; }
.crumb { margin-left: 25px; font-size: 30px; color: #8a8a8a; white-space: nowrap; }
.crumb-sep { width: 16px; height: 24px; margin-left: 12px; }
.crumb-sep + .crumb { margin-left: 13px; }
.zoom { margin-left: auto; font-size: 34px; font-weight: 500; color: #3d3d3d; }

/* details */
.details { flex: 1; min-height: 0; margin-bottom: 6px; overflow: hidden; }
.details .bar { height: 63px; padding: 0 8px 2px 13px; gap: 16px; }
.details .search { flex: 0 1 528px; }
.details .bar button:first-of-type { margin-left: 6px; }
.details .scroll { display: flex; gap: 7px; }
.details .thumb { height: 328px; margin-top: 3px; }
.props { width: 605px; font-size: 17px; line-height: 22px; color: #b8b8b8; }
.props h3 { display: flex; align-items: center; height: 42px; margin-bottom: 1px; padding-left: 8px; gap: 12px; background: #2f2f2f; font-size: 17px; color: #c8c8c8; }
.row { display: grid; grid-template-columns: 240px 327px 36px; gap: 1px; height: 42px; margin-bottom: 1px; }
.row > * { display: flex; align-items: center; background: #242424; min-width: 0; }
.row > :first-child { padding-left: 36px; }
.row > :nth-child(2) { padding-left: 21px; }
.row.big { height: 93px; }
.row input { width: 198px; height: 31px; padding: 0 12px 2px; border: 2px solid #2e2e2e; border-radius: 5px; background: #0f0f0f; }
.row input.name { width: 243px; }
.row input.num, .xyz input { color: #e6e6e6; }
.row input[type=checkbox] { flex: none; width: 27px; height: 27px; padding: 0; border-radius: 4px; }
.row input[type=checkbox]:checked { background: #0f0f0f url('data:image/svg+xml,<svg xmlns="http://www.w3.org/2000/svg" viewBox="0 0 24 24"><path d="M4 12l5 5L20 6" fill="none" stroke="%230070e0" stroke-width="3.500"/></svg>') center / 22px no-repeat; }
.combo { display: flex; align-items: center; width: 198px; height: 33px; padding-left: 11px; gap: 17px; border: 2px solid #2e2e2e; border-radius: 5px; background: #0f0f0f; }
.row .combo input { width: 126px; }
.kind { width: 136px; height: 34px; margin-left: 1px; }
.kind select { padding-left: 10px; }
.select.kind svg { right: 17px; }
.kind + svg { margin-left: 14px; }
.row > .xyz { gap: 2px; }
.row .xyz input { width: 100px; background: linear-gradient(var(--axis), var(--axis)) 2px center / 4px 22px no-repeat #0f0f0f; }
.ax { --axis: #d03010; } .ay { --axis: #68a800; } .az { --axis: #2878f0; }
.row > span:last-child { justify-content: center; }
.reset { width: 20px; height: 16px; margin-left: -3px; }
.seg { display: flex; width: 302px; height: 34px; border-radius: 5px; background: #0f0f0f; }
.seg label { display: flex; align-items: center; flex: 1; min-width: 0; padding: 0 13px; }
.seg label:has(:checked) { border-radius: 5px; background: #383838; color: #fff; }
.seg span { overflow: hidden; white-space: nowrap; }
.row .seg input { position: absolute; width: 1px; height: 1px; opacity: 0; padding: 0; }
.sock output { width: 116px; height: 38px; padding: 6px 13px; border: 2px solid #2c2c2c; border-radius: 5px; background: #2f2f2f; }
.sock .i28 { margin: 0 17px 0 8px; color: #c0c0c0; }
.shot { width: 78px; height: 80px; border: 1px solid #333; border-bottom: 3px solid #00e5ee; border-radius: 3px; background: repeating-conic-gradient(#0d0d0d 0 25%, #070707 0 50%) 0 0 / 18px 18px; overflow: hidden; }
.shot.mat { border-bottom-color: #3fae3f; }
.ball { display: block; width: 70px; height: 70px; margin: 4px 3px; border-radius: 50%; background: radial-gradient(circle at 66% 44%, #777 0, #484848 12%, #1e2224 34%, #10171b 60%, #0b1013 100%); }
.asset { width: 208px; margin-left: 16px; }
.asset .select { height: 34px; width: 204px; }
.asset select { padding-left: 9px; }
.mat + .asset .select { width: 208px; }
.mat + .asset .select svg { right: 17px; }
.tools { display: flex; align-items: center; gap: 15px; height: 46px; padding: 0 6px; }
.tools .i24 { margin-left: 4px; }
.tools .i14 { margin-left: -5px; }
.row > .element { padding-bottom: 10px; }
.adv { display: flex; align-items: center; height: 42px; margin-bottom: 1px; padding-left: 11px; gap: 15px; background: #242424; }
.off label, .off input { color: #555; }
.row > .mass { padding-left: 33px; gap: 8px; }
.off input:disabled { background: #1a1a1a; }

/* status bars */
.status { display: flex; flex: none; height: 52px; background: #242424; }
.status > * { display: flex; align-items: center; gap: 7px; border-right: 3px solid #181818; }
.s1 { width: 252px; padding-left: 14px; }
.status > .s1 { gap: 5px; }
.s2 { width: 149px; padding-left: 18px; }
.log { width: 20px; height: 25px; }
.status .log { margin-right: 2px; }
.s3 { width: 643px; padding-left: 21px; }
.s3 button { width: 120px; gap: 8px; }
.s3 button .i16 { margin-left: 3px; }
.cmd { width: 26px; height: 22px; }
.s3 input { width: 480px; height: 36px; padding: 0 12px 4px; border: 2px solid #333; border-radius: 6px; background: #0f0f0f; font-size: 20px; }
.fill { flex: 1; }
.s4 { width: 223px; padding-left: 19px; }
.s5 { width: 320px; padding-left: 22px; }
.status > .s5 { border: 0; }
.s6 { width: 257px; padding-left: 24px; }
.s6 button { gap: 6px; }
.s6 button + button { margin-left: 4px; }
.s6 button:nth-child(2) { margin-left: 18px; }
.s7 { width: 231px; padding-left: 24px; }
.s7 .i16 { margin-left: 14px; }
.strip { display: flex; flex: none; height: 19px; padding: 3px 6px 5px; }
.view { background: repeating-linear-gradient(90deg, #6c7079 0 96px, #62666e 96px 106px, #727680 106px 220px); }
.view.a { flex: 589; margin-right: 18px; }
.view.b { flex: 1424; margin-right: 9px; }
.rest { flex: 508; background: #242424; }
.outer { padding-right: 2px; }
```
FILE: graph.js
```js
const NS = 'http://www.w3.org/2000/svg';
function add(parent, tag, attrs) {
  const el = document.createElementNS(NS, tag);
  for (const k in attrs) el.setAttribute(k, attrs[k]);
  parent.appendChild(el);
  return el;
}

// grid: eight cells between two strong lines
const grid = document.getElementById('grid');
const cell = 143.45 / 8;
function line(i, origin, vertical) {
  const p = Math.round(origin + i * cell);
  const strong = i % 8 === 0;
  const a = vertical ? { x: p, y: 0, width: 2, height: 3000 } : { x: 0, y: p, width: 5000, height: 2 };
  a.fill = vertical && i === 0 ? '#050505' : strong ? '#181818' : '#2f2f2f';
  return a;
}
for (const strong of [false, true]) {
  for (let i = -60; i < 160; i++) {
    if ((i % 8 === 0) !== strong) continue;
    add(grid, 'rect', line(i, 636, true));
    add(grid, 'rect', line(i, 554, false));
  }
}

const layer = document.getElementById('nodes-layer');
const defs = add(layer, 'defs', {});
const heads = { red: ['#960e0e', '#4a0808'], blue: ['#35627f', '#1f3a4e'], gray: ['#7c7c7c', '#343434'], green: ['#56784f', '#2c4428'] };
for (const k in heads) {
  const g = add(defs, 'linearGradient', { id: 'h-' + k });
  add(g, 'stop', { offset: 0, 'stop-color': heads[k][0] });
  add(g, 'stop', { offset: 0.6, 'stop-color': heads[k][0] });
  add(g, 'stop', { offset: 1, 'stop-color': heads[k][1] });
}
function node(kind, x, y, w, h, opacity) {
  const g = add(layer, 'g', { opacity: opacity || 1 });
  if (heads[kind]) {
    const hh = h < 18 ? 7 : 11;
    add(g, 'rect', { x, y, width: w, height: h, rx: 1, fill: '#0d110e' });
    add(g, 'rect', { x, y, width: w, height: hh, rx: 1, fill: `url(#h-${kind})` });
    add(g, 'rect', { x: x + 5, y: y + 3, width: w - 18, height: hh - 6, rx: 2, fill: '#000', opacity: 0.3 });
  } else if (kind === 'var') {
    add(g, 'rect', { x, y, width: w, height: h, rx: 3, fill: '#16262e' });
    add(g, 'rect', { x: x + 3, y: y + 2, width: w - 14, height: 4, rx: 2, fill: '#22617f' });
    add(g, 'rect', { x: x + 1, y, width: w - 2, height: 1, fill: '#7a7a7a' });
    add(g, 'circle', { cx: x + w - 6, cy: y + 4, r: 2, fill: '#18a0f0' });
  } else {
    add(g, 'rect', { x, y, width: w, height: h, rx: 3, fill: '#1d2225', opacity: 0.85 });
    add(g, 'rect', { x: x + 1, y, width: w - 2, height: kind === 'set' ? 4 : 2, rx: 1, fill: kind === 'set' ? '#2a6f90' : '#666' });
    if (kind === 'set') add(g, 'rect', { x: x + 14, y: y + 4, width: 8, height: 3, fill: '#7fa4b4' });
  }
}
const inks = { e: '#b8b8b8', w: '#e8e8e8', b: '#18a0f0', r: '#b00000', g: '#30c010', y: '#e8b820' };
const weights = { w: 1, e: 0.4, b: 0.32, r: 0.35, g: 0.4, y: 0.35 };
function wire(kind, ...p) {
  let d = `M${p[0]} ${p[1]}`;
  for (let i = 2; i < p.length; i += 2) {
    const mx = (p[i - 2] + p[i]) / 2;
    d += `C${mx} ${p[i - 1]} ${mx} ${p[i + 1]} ${p[i]} ${p[i + 1]}`;
  }
  add(layer, 'path', { d, fill: 'none', stroke: inks[kind], 'stroke-width': kind === 'w' ? 3 : 2, opacity: weights[kind] });
}
function pin(kind, x, y, hollow) {
  if (kind === 'e' && hollow) add(layer, 'path', { d: `M${x - 1} ${y - 3}l2 3-2 3`, fill: 'none', stroke: '#ccc', 'stroke-width': 1 });
  else if (kind === 'e') add(layer, 'path', { d: `M${x - 2} ${y - 2.5}h2.500l2 2.500-2 2.500h-2.500z`, fill: '#fff' });
  else add(layer, 'circle', { cx: x, cy: y, r: hollow ? 1.7 : 2, fill: hollow ? 'none' : inks[kind], stroke: inks[kind], 'stroke-width': hollow ? 0.8 : 0 });
}

const wires = [
  ['e', 1225, 538, 1245, 544], ['e', 1276, 544, 1304, 544], ['e', 1334, 544, 1473, 544], ['e', 1504, 544, 1800, 539],
  ['b', 1670, 567, 1720, 562], ['b', 1771, 562, 1800, 550], ['b', 1771, 562, 1796, 595], ['r', 1190, 570, 1246, 552],
  ['e', 1178, 688, 1281, 683], ['g', 1177, 697, 1227, 710], ['r', 1249, 713, 1281, 699],
  ['e', 1186, 848, 1402, 844], ['e', 1186, 857, 1249, 862], ['e', 1186, 866, 1249, 938], ['e', 1281, 938, 1321, 938],
  ['b', 1265, 887, 1317, 888], ['b', 1265, 887, 1317, 911], ['y', 1347, 888, 1402, 860], ['y', 1347, 911, 1402, 867],
];
const items = [
  ['red', 1182, 526, 48, 16], ['gray', 1240, 527, 41, 30], ['blue', 1299, 527, 41, 29], ['green', 1155, 553, 42, 21],
  ['blue', 1468, 527, 42, 37], ['green', 1634, 551, 42, 21], ['box', 1715, 544, 62, 37], ['blue', 1795, 522, 42, 53],
  ['red', 1141, 662, 42, 52], ['box', 1223, 705, 32, 16], ['blue', 1276, 666, 41, 38],
  ['red', 1151, 831, 41, 60], ['blue', 1244, 844, 42, 30], ['blue', 1397, 827, 41, 45], ['var', 1235, 882, 37, 9],
  ['green', 1311, 872, 42, 20], ['green', 1311, 894, 42, 21], ['blue', 1244, 921, 42, 30], ['blue', 1316, 921, 42, 30],
];
const hollow = [
  ['e', 1276, 552], ['g', 1304, 552], ['b', 1474, 559], ['r', 1474, 552], ['g', 1640, 567], ['b', 1801, 555], ['g', 1801, 562], ['b', 1801, 570],
  ['e', 1178, 679], ['b', 1177, 704], ['b', 1282, 692], ['e', 1311, 683], ['g', 1228, 717],
  ['g', 1186, 874], ['b', 1186, 882], ['b', 1250, 870], ['e', 1280, 862], ['b', 1403, 852], ['e', 1433, 844],
  ['b', 1250, 946], ['b', 1322, 946], ['e', 1352, 938],
];
// the two grab chains share one layout; the second is a little wider
function grab(dy, dy2, s, u, v, fade) {
  const [a, b, c, d, e] = s;
  const w = (k, ...p) => wires.push([k, ...p.map((n, i) => (i % 2 ? n + dy : n))]);
  const n = (k, x, y, ww, h) => items.push([k, x, y + dy, ww, h]);
  w('e', 1178, 1104, 1290, 1099); w('e', 1320, 1099, a + 5, 1104); w('e', a + 36, 1104, c + 5, 1100);
  w('e', c + 36, 1100, d + 5, 1104); w('e', d + 36, 1104, e + 5, 1099); w('e', e + 31, 1099, 1836, 1104); w('e', 1867, 1104, 1895, 1099);
  w('b', 1261, 1116, 1290, 1115); w('b', 1320, 1107, a + 5, 1113); w('b', 1320, 1107, u, 1125); w('b', u, 1125, v, 1125);
  w('b', v, 1125, 1612, 1125); w('b', 1612, 1125, e + 5, 1107); w('b', b + 29, 1116, c + 5, 1108); w('b', v, 1125, c + 5, 1115);
  w('r', c + 35, 1108, d + 5, 1113); w('r', 1814, 1113, 1836, 1113); w('b', 1758, 1109, 1787, 1109); w('b', 1758, 1118, 1787, 1117);
  wires.push(['e', 1178, 1113 + dy, 1290, 1161 + dy2]);
  n('red', 1141, 1078, 42, 60); n('var', 1232, 1112, 35, 9); n('blue', 1285, 1082, 41, 38); n('gray', a, 1087, 41, 31);
  n('var', b, 1110, 36, 9); n('blue', c, 1082, 41, 38); n('gray', d, 1087, 41, 31); n('set', e, 1091, 36, 20);
  n('var', 1728, 1105, 36, 9); n('var', 1728, 1113, 36, 9); n('box', 1783, 1104, 37, 17); n('gray', 1832, 1087, 41, 31); n('set', 1890, 1091, 36, 20);
  const k = fade ? [1366, 1435, 1495] : [1361, 1429, 1487];
  items.push(['set', 1285, 1149 + dy2, 36, 33, fade], ['blue', k[0], 1144 + dy2, 41, 30, fade], ['gray', k[1], 1149 + dy2, 41, 31, fade], ['set', k[2], 1153 + dy2, 36, 20, fade]);
  wires.push(['e', 1315, 1161 + dy2, k[0] + 5, 1161 + dy2], ['e', k[0] + 36, 1161 + dy2, k[1] + 5, 1166 + dy2], ['e', k[1] + 36, 1166 + dy2, k[2] + 5, 1161 + dy2],
    ['b', 1315, 1178 + dy2, k[0] + 5, 1170 + dy2], ['r', k[0] + 35, 1170 + dy2, k[1] + 5, 1175 + dy2]);
  hollow.push(['e', 1178, 1095 + dy], ['g', 1177, 1122 + dy], ['b', 1177, 1129 + dy], ['e', a + 36, 1113 + dy], ['e', d + 36, 1113 + dy], ['b', e + 30, 1107 + dy], ['e', 1867, 1113 + dy],
    ['e', 1315, 1170 + dy2], ['e', k[1] + 36, 1175 + dy2], ['e', k[2] + 30, 1161 + dy2], ['b', k[2] + 30, 1169 + dy2]);
}
grab(0, 0, [1388, 1451, 1505, 1576, 1643], 1397, 1482);
grab(219, 229, [1392, 1460, 1523, 1594, 1648], 1393, 1505, 0.65);

wires.forEach(w => wire(...w));
add(layer, 'path', { d: 'M1838 539H3000', stroke: '#e8e8e8', 'stroke-width': 3 });
add(layer, 'path', { d: 'M1796 595H3000', stroke: '#1583b8', 'stroke-width': 2 });
items.forEach(i => node(...i));
for (const w of wires) {
  pin(w[0], w[1], w[2]);
  pin(w[0], w[w.length - 2], w[w.length - 1]);
}
pin('e', 1832, 539);
hollow.forEach(h => pin(h[0], h[1], h[2], true));
add(layer, 'path', { d: 'M1603 642h4v-4zM1894 686h4v-4zM1463 991h4v-4z', fill: '#aaa' });
```
